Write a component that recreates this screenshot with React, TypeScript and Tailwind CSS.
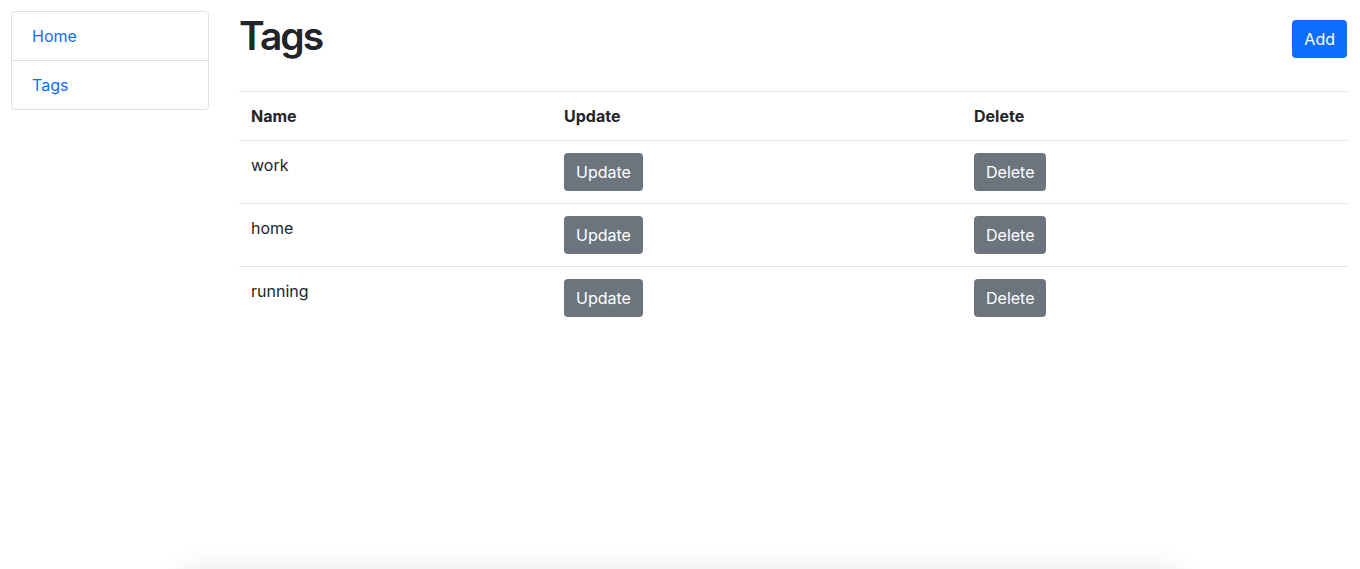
import React from "react";

const tags = ["work", "home", "running"];

export default function App() {
  return (
    <div
      className="relative min-h-[569px] overflow-hidden bg-white text-[16px] leading-[24px] text-[#212529]"
      style={{ fontFamily: "Inter, 'Liberation Sans', sans-serif" }}
    >
      <div className="flex pl-[11px] pr-[13px]">
        <div className="w-[198px] shrink-0 pt-[11px]">
          <div className="flex flex-col rounded-[4px] border border-[#dfdfdf]">
            <a className="px-[20px] py-[12px] text-[#0d6efd]">Home</a>
            <a className="border-t border-[#dfdfdf] px-[20px] py-[12px] text-[#0d6efd]">Tags</a>
          </div>
        </div>
        <div className="ml-[30px] flex-1 pt-[12px]">
          <div className="flex items-start justify-between">
            <h1 className="text-[39px] font-semibold leading-[48px] tracking-[-2px]">Tags</h1>
            <button className="mt-[8px] h-[38px] rounded-[4px] bg-[#0d6efd] px-[12px] text-white">Add</button>
          </div>
          <table className="mt-[31px] w-full border-collapse text-left">
            <thead>
              <tr className="border-t border-[#dee2e6]">
                <th className="w-[313px] p-[12px] font-bold">Name</th>
                <th className="w-[410px] p-[12px] font-bold">Update</th>
                <th className="p-[12px] font-bold">Delete</th>
              </tr>
            </thead>
            <tbody>
              {tags.map((t) => (
                <tr key={t} className="border-t border-[#dee2e6]">
                  <td className="p-[12px] align-top">{t}</td>
                  <td className="p-[12px] align-top">
                    <button className="h-[38px] rounded-[4px] bg-[#6c757d] px-[12px] text-white">Update</button>
                  </td>
                  <td className="p-[12px] align-top">
                    <button className="h-[38px] rounded-[4px] bg-[#6c757d] px-[12px] text-white">Delete</button>
                  </td>
                </tr>
              ))}
            </tbody>
          </table>
        </div>
      </div>
      <div className="absolute left-[180px] right-[180px] top-[574px] h-[40px] rounded-[20px] shadow-[0_0_24px_8px_rgba(0,0,0,0.08)]" />
    </div>
  );
}
